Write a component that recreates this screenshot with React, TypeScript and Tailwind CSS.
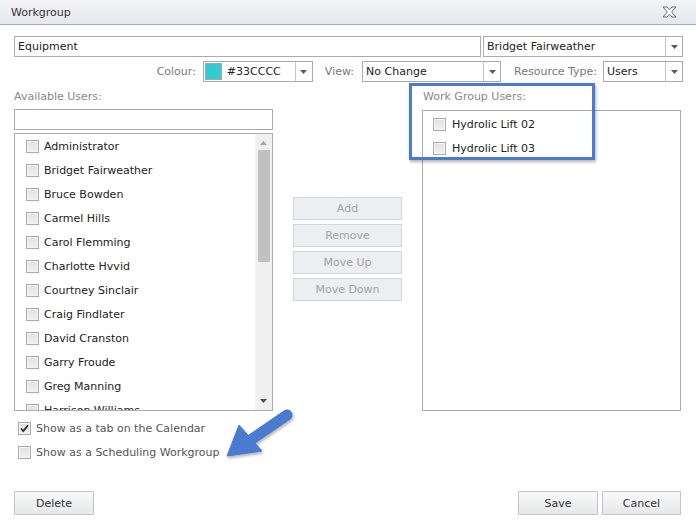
import React from 'react';

const availableUsers = [
  'Administrator',
  'Bridget Fairweather',
  'Bruce Bowden',
  'Carmel Hills',
  'Carol Flemming',
  'Charlotte Hvvid',
  'Courtney Sinclair',
  'Craig Findlater',
  'David Cranston',
  'Garry Froude',
  'Greg Manning',
  'Harrison Williams',
];

const groupUsers = ['Hydrolic Lift 02', 'Hydrolic Lift 03'];

function Checkbox({ checked = false }: { checked?: boolean }) {
  return (
    <span className="relative flex h-[13px] w-[13px] shrink-0 items-center justify-center border border-[#a9abae] bg-[#f4f4f4]">
      <span className="absolute inset-[1px] bg-gradient-to-b from-[#e2e2e2] to-[#efefef]" />
      {checked && (
        <svg width="11" height="11" viewBox="0 0 11 11" className="relative">
          <path d="M2 5.5 L4.3 8 L9 2.2" fill="none" stroke="#2b2b2b" strokeWidth="1.8" />
        </svg>
      )}
    </span>
  );
}

function Caret() {
  return (
    <svg width="7" height="4" viewBox="0 0 7 4">
      <path d="M0 0 H7 L3.5 4 Z" fill="#5a5a5a" />
    </svg>
  );
}

function Select({ value, className }: { value: string; className: string }) {
  return (
    <div className={`flex h-[21px] items-stretch border border-[#a8acb1] bg-white ${className}`}>
      <span className="flex flex-1 items-center pl-[3px] text-[#222]">{value}</span>
      <span className="flex w-[17px] items-center justify-center border-l border-[#c4c7cb]">
        <Caret />
      </span>
    </div>
  );
}

function SideButton({ label }: { label: string }) {
  return (
    <div className="flex h-[23px] w-[109px] items-center justify-center border border-[#d3d6da] bg-[#eceef1] text-[#a3a3a3]">
      {label}
    </div>
  );
}

function FootButton({ label, className = '' }: { label: string; className?: string }) {
  return (
    <div
      className={`flex h-[24px] items-center justify-center border border-[#c3c5c8] bg-gradient-to-b from-[#fafafa] to-[#e6e7e9] text-[#333] ${className}`}
    >
      {label}
    </div>
  );
}

export default function App() {
  return (
    <div
      className="relative h-[526px] w-[696px] overflow-hidden bg-white text-[11px] leading-none text-[#333]"
      style={{ fontFamily: '"DejaVu Sans", Verdana, sans-serif' }}
    >
      {/* Заголовок */}
      <div className="flex h-[25px] items-center justify-between border-b border-[#a6abb1] bg-gradient-to-b from-[#f3f4f6] to-[#e5e7ea] pl-[11px] pr-[19px]">
        <span className="text-[#333]">Workgroup</span>
        <svg width="15" height="12" viewBox="0 0 15 12">
          <path
            d="M1 1 H5 L7.5 3.8 L10 1 H14 L9.6 6 L14 11 H10 L7.5 8.2 L5 11 H1 L5.4 6 Z"
            fill="#fff"
            stroke="#6a6a6a"
            strokeWidth="1"
          />
        </svg>
      </div>

      <div className="pl-[14px] pr-[13px]">
        {/* Имя и владелец */}
        <div className="mt-[11px] flex gap-[2px]">
          <div className="flex h-[21px] w-[467px] items-center border border-[#a8acb1] pl-[3px] text-[#222]">
            Equipment
          </div>
          <Select value="Bridget Fairweather" className="w-[200px]" />
        </div>

        {/* Цвет, вид, тип */}
        <div className="mt-[4px] flex h-[21px] items-center justify-end text-[#777]">
          <span className="mr-[7px]">Colour:</span>
          <div className="flex h-[21px] w-[110px] items-stretch border border-[#a8acb1] bg-white">
            <span className="flex flex-1 items-center pl-[1px]">
              <span className="h-[17px] w-[17px] border border-[#9ab] bg-[#33CCCC]" />
              <span className="ml-[5px] text-[#222]">#33CCCC</span>
            </span>
            <span className="flex w-[17px] items-center justify-center border-l border-[#c4c7cb]">
              <Caret />
            </span>
          </div>
          <span className="ml-[12px] mr-[8px]">View:</span>
          <Select value="No Change" className="w-[139px]" />
          <span className="ml-[13px] mr-[6px]">Resource Type:</span>
          <Select value="Users" className="w-[80px]" />
        </div>

        {/* Списки */}
        <div className="mt-[8px] flex gap-[20px]">
          <div className="flex w-[259px] flex-col">
            <span className="h-[14px] leading-[14px] text-[#888]">Available Users:</span>
            <div className="mt-[5px] h-[21px] border border-[#a8acb1]" />
            <div className="mt-[3px] flex h-[278px] overflow-hidden border border-[#a8acb1]">
              <div className="flex-1 overflow-hidden">
                {availableUsers.map((name) => (
                  <div key={name} className="flex h-[24px] shrink-0 items-center gap-[5px] pl-[11px] text-[#222]">
                    <Checkbox />
                    <span>{name}</span>
                  </div>
                ))}
              </div>
              <div className="flex w-[17px] flex-col items-center bg-[#f0f0f0]">
                <svg width="7" height="4" viewBox="0 0 7 4" className="mt-[7px]">
                  <path d="M0 4 H7 L3.5 0 Z" fill="#a3a3a3" />
                </svg>
                <div className="mt-[5px] h-[112px] w-[12px] bg-[#c1c1c1]" />
                <div className="flex-1" />
                <svg width="7" height="4" viewBox="0 0 7 4" className="mb-[7px]">
                  <path d="M0 0 H7 L3.5 4 Z" fill="#505050" />
                </svg>
              </div>
            </div>
          </div>

          <div className="flex flex-col gap-[4px] pt-[107px]">
            <SideButton label="Add" />
            <SideButton label="Remove" />
            <SideButton label="Move Up" />
            <SideButton label="Move Down" />
          </div>

          <div className="flex w-[259px] flex-col">
            <span className="h-[14px] pl-[1px] leading-[14px] text-[#888]">Work Group Users:</span>
            <div className="mt-[6px] h-[301px] border border-[#a8acb1] pt-[1px]">
              {groupUsers.map((name) => (
                <div key={name} className="flex h-[24px] items-center gap-[6px] pl-[10px] text-[#222]">
                  <Checkbox />
                  <span>{name}</span>
                </div>
              ))}
            </div>
          </div>
        </div>

        {/* Флажки */}
        <div className="mt-[11px] flex flex-col gap-[11px] pl-[4px] text-[#555]">
          <label className="flex h-[13px] items-center gap-[5px]">
            <Checkbox checked />
            <span>Show as a tab on the Calendar</span>
          </label>
          <label className="flex h-[13px] items-center gap-[5px]">
            <Checkbox />
            <span>Show as a Scheduling Workgroup</span>
          </label>
        </div>

        {/* Кнопки */}
        <div className="mr-[2px] mt-[32px] flex items-center">
          <FootButton label="Delete" className="w-[80px]" />
          <div className="flex-1" />
          <FootButton label="Save" className="w-[80px]" />
          <FootButton label="Cancel" className="ml-[4px] w-[79px]" />
        </div>
      </div>

      {/* Выделение */}
      <div className="pointer-events-none absolute left-[409px] top-[83px] h-[77px] w-[186px] border-[3px] border-[#4a7bd0] shadow-[1px_2px_3px_rgba(0,0,0,0.3)]" />

      {/* Стрелка */}
      <svg
        className="pointer-events-none absolute left-0 top-0"
        width="696"
        height="526"
        viewBox="0 0 696 526"
        style={{ filter: 'drop-shadow(1px 2px 1.5px rgba(0,0,0,0.3))' }}
      >
        <line x1="287" y1="415" x2="252" y2="439" stroke="#4a7bd0" strokeWidth="11" strokeLinecap="round" />
        <path d="M239 425 L262 451 L227 456 Z" fill="#4a7bd0" strokeLinejoin="round" stroke="#4a7bd0" strokeWidth="1" />
      </svg>
    </div>
  );
}
